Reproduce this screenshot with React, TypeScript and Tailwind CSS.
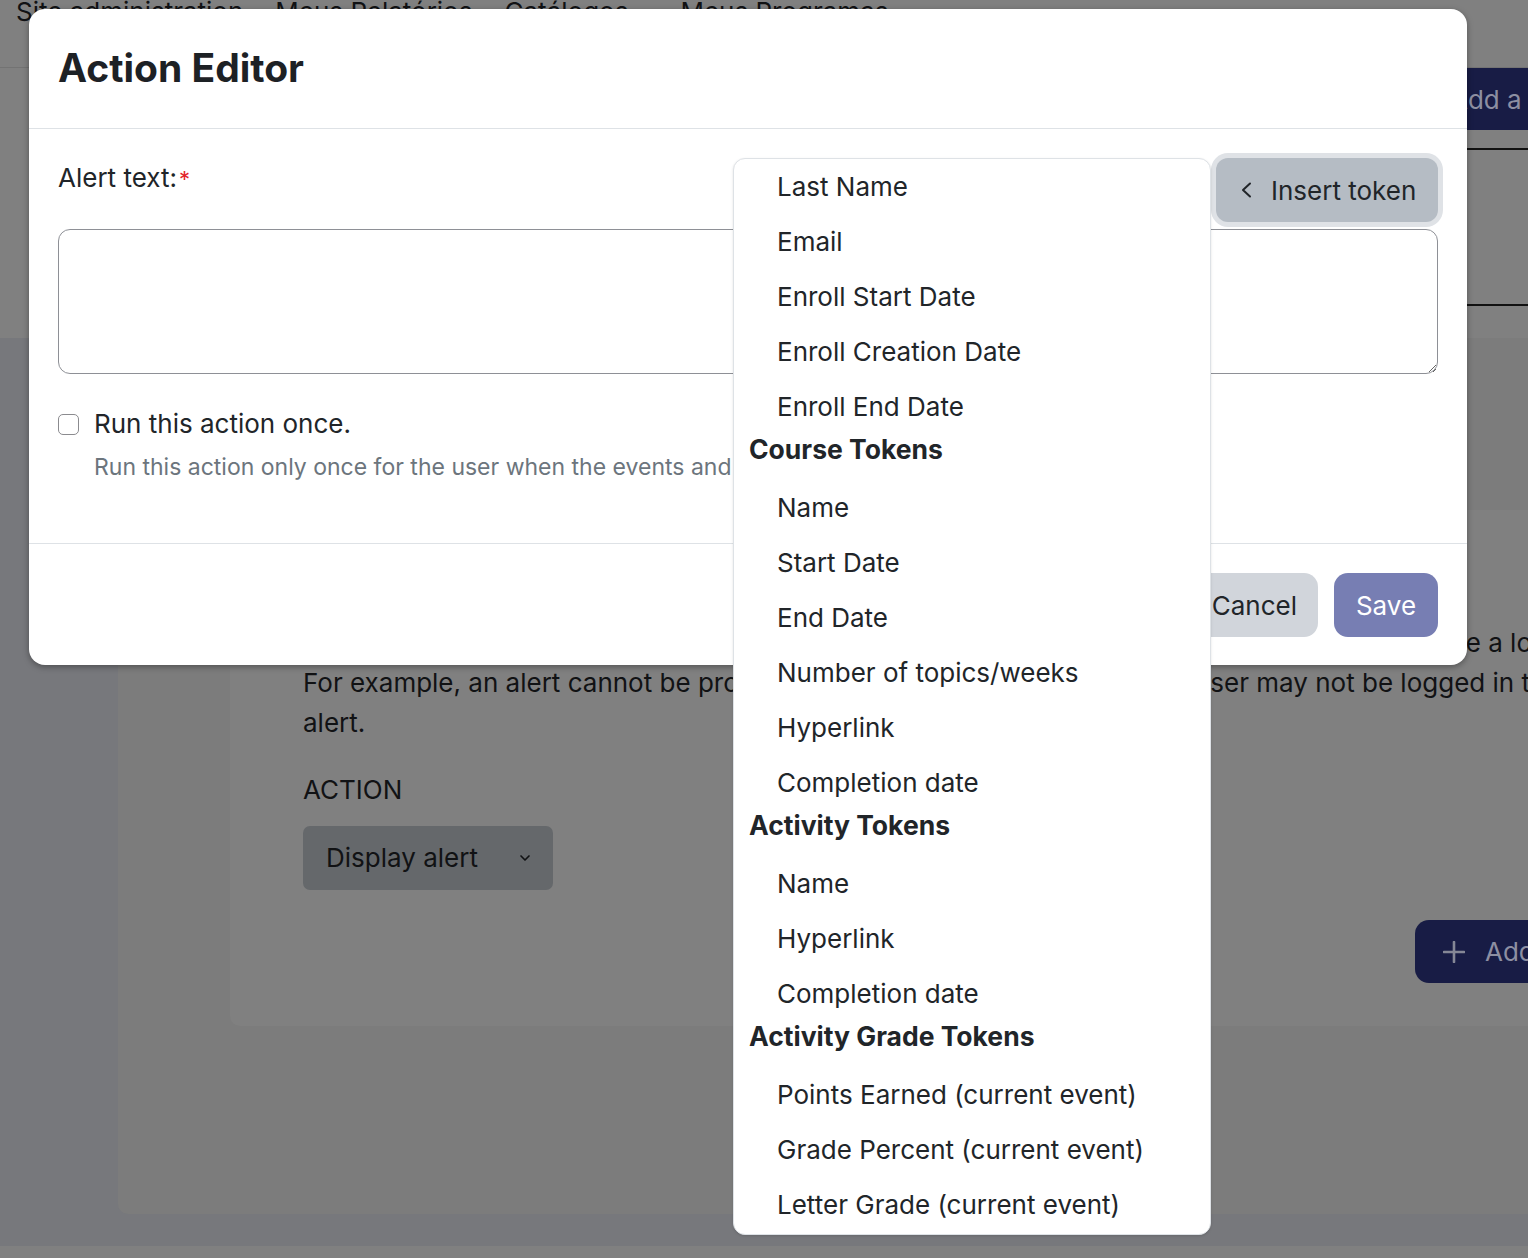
import React from "react";
import { ChevronDown } from "lucide-react";

const userTokens = ["Last Name", "Email", "Enroll Start Date", "Enroll Creation Date", "Enroll End Date"];
const groups = [
  { title: "Course Tokens", items: ["Name", "Start Date", "End Date", "Number of topics/weeks", "Hyperlink", "Completion date"] },
  { title: "Activity Tokens", items: ["Name", "Hyperlink", "Completion date"] },
  { title: "Activity Grade Tokens", items: ["Points Earned (current event)", "Grade Percent (current event)", "Letter Grade (current event)"] },
];

function Item({ label }: { label: string }) {
  return <div className="flex h-[55px] items-center whitespace-nowrap pl-[43px]">{label}</div>;
}

function TokenMenu() {
  return (
    <div className="absolute right-full top-0 mr-[5px] w-[478px] rounded-[12px] border border-[#dee2e6] bg-white pb-[2px] text-[26px] text-[#212529] shadow-sm">
      {userTokens.map((t) => (
        <Item key={t} label={t} />
      ))}
      {groups.map((g) => (
        <div key={g.title}>
          <div className="mb-[15px] flex h-[31px] items-center whitespace-nowrap pl-[15px] text-[26.5px] font-bold">{g.title}</div>
          {g.items.map((t) => (
            <Item key={g.title + t} label={t} />
          ))}
        </div>
      ))}
    </div>
  );
}

export default function App() {
  return (
    <div className="relative h-[1258px] w-[1528px] overflow-hidden bg-[#77787c] font-['Inter',sans-serif] text-[#111214]">
      {/* background page (dimmed by backdrop) */}
      <div className="flex h-[68px] items-start border-b border-[#737373] bg-[#808080] pl-4 text-[26px] leading-[40px]">
        <span className="-mt-2 whitespace-nowrap">Site administration</span>
        <span className="-mt-2 ml-8 whitespace-nowrap">Meus Relatórios</span>
        <span className="-mt-2 ml-8 whitespace-nowrap">Catálogos</span>
        <span className="-mt-2 ml-[52px] whitespace-nowrap">Meus Programas</span>
      </div>
      <div className="flex h-[270px] flex-col bg-[#808080] pl-[1424px]">
        <div className="flex h-[62px] w-[200px] items-center rounded-bl-[12px] bg-[#181c45] pl-[26px] text-[26px] whitespace-nowrap text-[#8d8fa2]">
          Add a rule
        </div>
        <div className="mt-[18px] h-[158px] border-y-2 border-[#111]" />
      </div>
      <div className="flex">
        <div className="w-[118px] shrink-0" />
        <div className="h-[876px] min-w-0 flex-1 rounded-bl-[10px] bg-[#7c7c7c] pl-[112px] pt-[172px]">
          <div className="h-[516px] min-w-0 rounded-bl-[10px] bg-[#808080] pl-[73px] pt-[113px] text-[26px] leading-[40px]">
            <div className="-mr-[4px] overflow-hidden whitespace-nowrap text-right">Some of these actions require the user to have a lo</div>
            <div className="-mr-[2px] flex justify-between overflow-hidden whitespace-nowrap">
              <span>For example, an alert cannot be provided</span>
              <span>when the user may not be logged in t</span>
            </div>
            <div className="whitespace-nowrap">alert.</div>
            <div className="mt-[27px]">ACTION</div>
            <div className="mt-[16px] flex h-[64px] w-[250px] items-center justify-between rounded-[7px] bg-[#65686b] pl-[23px] pr-[20px]">
              <span>Display alert</span>
              <ChevronDown size={16} strokeWidth={2.5} />
            </div>
            <div className="ml-[1112px] mt-[30px] flex h-[63px] w-[220px] items-center gap-[20px] rounded-l-[14px] bg-[#181c45] pl-[28px] text-[#8d8fa2]">
              <svg width="22" height="22" viewBox="0 0 22 22" stroke="#858796" strokeWidth="2.6" strokeLinecap="round">
                <path d="M11 1v20M1 11h20" />
              </svg>
              <span>Add</span>
            </div>
          </div>
        </div>
      </div>
      <div className="mt-[32px] h-[14px] bg-[#808080]" />

      {/* modal */}
      <div className="absolute left-[29px] top-[9px] flex h-[656px] w-[1438px] flex-col rounded-[16px] bg-white text-[#212529] shadow-[0_2px_6px_rgba(0,0,0,0.35)]">
        <div className="flex h-[120px] shrink-0 items-center border-b border-[#dee2e6] px-[29px]">
          <h2 className="text-[39px] font-bold text-[#1d2125]">Action Editor</h2>
        </div>
        <div className="flex-1 px-[29px] pt-[29px]">
          <div className="flex items-start justify-between">
            <label className="text-[26px] leading-[39px]">
              Alert text:<span className="ml-[2px] text-[22px] text-[#e3242b]">*</span>
            </label>
            <div className="relative">
              <button className="flex h-[64px] w-[222px] items-center gap-[19px] rounded-[12px] bg-[#b5bcc4] pl-[25px] text-[26px] text-[#212529] ring-[5px] ring-[#dfe2e6]">
                <svg width="11" height="16" viewBox="0 0 11 16" fill="none" stroke="#212529" strokeWidth="2" strokeLinecap="round" strokeLinejoin="round">
                  <path d="M9 1.5 2 8l7 6.5" />
                </svg>
                Insert token
              </button>
              <TokenMenu />
            </div>
          </div>
          <textarea className="mt-[7px] block h-[145px] w-full rounded-[12px] border border-[#8e9096] bg-white outline-none" />
          <div className="mt-[32px] flex items-center gap-[15px]">
            <span className="block h-[21px] w-[21px] rounded-[5px] border-[1.5px] border-[#8b8b8f] bg-white" />
            <span className="text-[26px] leading-[36px]">Run this action once.</span>
          </div>
          <div className="mt-[9px] whitespace-nowrap pl-[36px] text-[23px] leading-[32px] text-[#6c757d]">
            Run this action only once for the user when the events and conditions are met.
          </div>
        </div>
        <div className="flex shrink-0 justify-end gap-4 border-t border-[#dee2e6] px-[29px] pb-[28px] pt-[29px]">
          <button className="h-[64px] rounded-[14px] bg-[#d1d5db] px-[21px] text-[26px] text-[#212529]">Cancel</button>
          <button className="h-[64px] w-[104px] rounded-[14px] bg-[#777eb3] text-[26px] text-white">Save</button>
        </div>
      </div>
    </div>
  );
}
